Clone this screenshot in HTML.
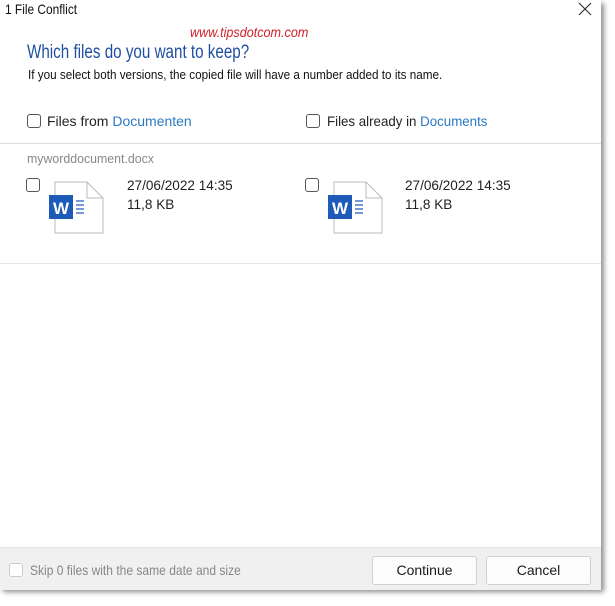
<!DOCTYPE html>
<html><head><style>
body{margin:0;width:615px;height:606px;background:#fff;font-family:"Liberation Sans",sans-serif;position:relative;overflow:hidden}
.dlg{position:absolute;left:0;top:0;width:601px;height:589px;background:#fff;box-shadow:3px 3px 5px rgba(0,0,0,.45)}
.abs{position:absolute;white-space:nowrap;transform-origin:0 0}
.cb{position:absolute;width:12px;height:12px;border:1px solid #555;border-radius:3px;background:#fff}
.blue{color:#2b79c2}
.foot{position:absolute;left:0;top:547px;width:601px;height:42px;background:#f0f0f0;border-top:1px solid #e2e2e2}
.btn{position:absolute;top:8px;height:27px;width:103px;background:#fdfdfd;border:1px solid #d0d0d0;border-radius:3px;font-size:14px;text-align:center;line-height:27px;color:#1a1a1a}
</style></head><body>
<div class="dlg">
<div class="abs" style="left:5px;top:1px;font-size:14px;color:#111;transform:scaleX(.85)">1 File Conflict</div>
<svg class="abs" style="left:578px;top:2px" width="14" height="14"><path d="M1 1L13 13M13 1L1 13" stroke="#333" stroke-width="1.2"/></svg>
<div class="abs" style="left:190px;top:24px;font-size:14px;font-style:italic;color:#d0202a;transform:scaleX(.9)">www.tipsdotcom.com</div>
<div class="abs" style="left:27px;top:42px;font-size:19px;color:#1f4fa0;transform:scaleX(.8)">Which files do you want to keep?</div>
<div class="abs" style="left:28px;top:67px;font-size:13px;color:#111;transform:scaleX(.9)">If you select both versions, the copied file will have a number added to its name.</div>
<div class="cb" style="left:27px;top:114px"></div>
<div class="abs" style="left:47px;top:113px;font-size:14px;color:#222">Files from <span class="blue">Documenten</span></div>
<div class="cb" style="left:306px;top:114px"></div>
<div class="abs" style="left:327px;top:113px;font-size:14px;color:#222;transform:scaleX(.95)">Files already in <span class="blue">Documents</span></div>
<div class="abs" style="left:0;top:143px;width:601px;height:1px;background:#ddd"></div>
<div class="abs" style="left:27px;top:151px;font-size:13px;color:#888;transform:scaleX(.95)">myworddocument.docx</div>
<div class="cb" style="left:26px;top:178px"></div>
<div class="cb" style="left:305px;top:178px"></div>
<svg class="abs" style="left:49px;top:181px" width="56" height="54"><path d="M6 1H38L54 17V52H6Z" fill="#fff" stroke="#bbb"/><path d="M38 1V17H54" fill="none" stroke="#bbb"/><rect x="0" y="14" width="24" height="24" fill="#1e5bb8"/><text x="12" y="33" fill="#fff" font-family="Liberation Sans" font-weight="bold" font-size="17" text-anchor="middle">W</text><path d="M27 20H35M27 24H35M27 28H35M27 32H35" stroke="#4a78c8" stroke-width="1.5"/></svg>
<svg class="abs" style="left:328px;top:181px" width="56" height="54"><path d="M6 1H38L54 17V52H6Z" fill="#fff" stroke="#bbb"/><path d="M38 1V17H54" fill="none" stroke="#bbb"/><rect x="0" y="14" width="24" height="24" fill="#1e5bb8"/><text x="12" y="33" fill="#fff" font-family="Liberation Sans" font-weight="bold" font-size="17" text-anchor="middle">W</text><path d="M27 20H35M27 24H35M27 28H35M27 32H35" stroke="#4a78c8" stroke-width="1.5"/></svg>
<div class="abs" style="left:127px;top:176px;font-size:14px;color:#222;line-height:19px;transform:scaleX(.97)">27/06/2022 14:35<br>11,8 KB</div>
<div class="abs" style="left:405px;top:176px;font-size:14px;color:#222;line-height:19px;transform:scaleX(.97)">27/06/2022 14:35<br>11,8 KB</div>
<div class="abs" style="left:0;top:263px;width:601px;height:1px;background:#e6e6e6"></div>
<div class="foot">
<div class="cb" style="left:9px;top:15px;border-color:#ccc"></div>
<div class="abs" style="left:30px;top:14px;font-size:14px;color:#888;transform:scaleX(.86)">Skip 0 files with the same date and size</div>
<div class="btn" style="left:372px">Continue</div>
<div class="btn" style="left:486px">Cancel</div>
</div>
</div>
</body></html>
